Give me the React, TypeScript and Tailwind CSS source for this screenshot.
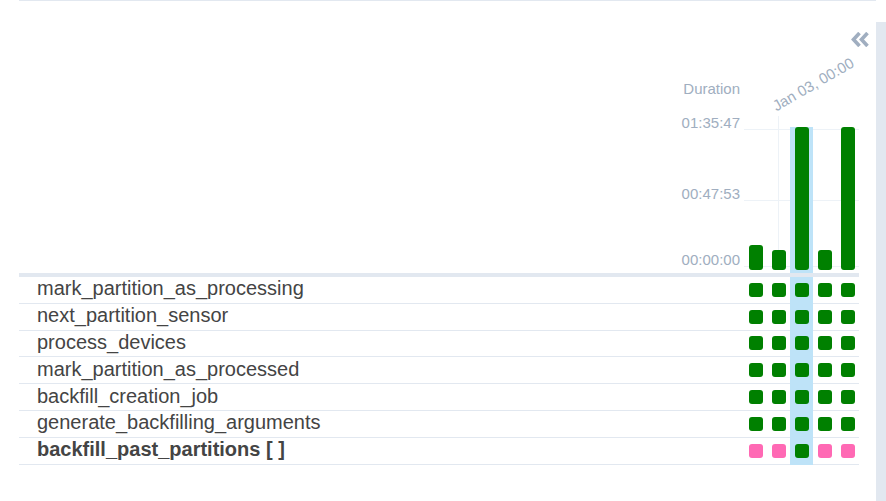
import React from 'react';

type State = 'success' | 'pending';

const tasks: { name: string; bold?: boolean; states: State[] }[] = [
  { name: 'mark_partition_as_processing', states: ['success', 'success', 'success', 'success', 'success'] },
  { name: 'next_partition_sensor', states: ['success', 'success', 'success', 'success', 'success'] },
  { name: 'process_devices', states: ['success', 'success', 'success', 'success', 'success'] },
  { name: 'mark_partition_as_processed', states: ['success', 'success', 'success', 'success', 'success'] },
  { name: 'backfill_creation_job', states: ['success', 'success', 'success', 'success', 'success'] },
  { name: 'generate_backfilling_arguments', states: ['success', 'success', 'success', 'success', 'success'] },
  { name: 'backfill_past_partitions [ ]', bold: true, states: ['pending', 'pending', 'success', 'pending', 'pending'] },
];

// bar heights in px (max = 143)
const bars = [25, 20, 143, 20, 143];
const selected = 2;

const labelFont = { fontFamily: '"Liberation Sans", Arial, sans-serif' };

const App: React.FC = () => {
  return (
    <div className="flex w-[886px] h-[501px] bg-white overflow-hidden" style={labelFont}>
      <div className="ml-[19px] w-[857px] border-t border-[#e2e8f0]">
        {/* header with duration chart */}
        <div className="h-[272px] flex flex-col">
          <div className="flex justify-end pt-[31px] pr-[7px]">
            <svg width="18" height="15" viewBox="0 0 18 15">
              <polyline points="8.5,1 2.5,7.5 8.5,14" fill="none" stroke="#a0aec0" strokeWidth="3.6" />
              <polyline points="16.5,1 10.5,7.5 16.5,14" fill="none" stroke="#a0aec0" strokeWidth="3.6" />
            </svg>
          </div>
          <div className="mt-auto w-[840px] flex justify-end">
            <div className="relative w-[115px] h-[157px]">
              {/* axis labels */}
              <span className="absolute right-[119px] top-[-36px] text-[15px] leading-[17px] text-[#a0aec0] whitespace-nowrap">Duration</span>
              <span className="absolute right-[119px] top-[-2px] text-[15px] leading-[17px] text-[#a0aec0]">01:35:47</span>
              <span className="absolute right-[119px] top-[69px] text-[15px] leading-[17px] text-[#a0aec0]">00:47:53</span>
              <span className="absolute right-[119px] top-[135px] text-[15px] leading-[17px] text-[#a0aec0]">00:00:00</span>
              <span className="absolute left-[69px] top-[-32px] -translate-x-1/2 -translate-y-1/2 rotate-[-30deg] text-[15px] leading-[17px] text-[#a0aec0] whitespace-nowrap">
                Jan 03, 00:00
              </span>
              {/* grid lines */}
              <div className="absolute left-0 right-0 top-[13px] h-px bg-[#edf2f7]" />
              <div className="absolute left-0 right-0 top-[84px] h-px bg-[#edf2f7]" />
              <div className="absolute left-0 right-0 top-[150px] h-px bg-[#edf2f7]" />
              <div className="absolute left-[34px] top-0 h-[154px] w-px bg-[#edf2f7]" />
              {/* bars */}
              <div className="relative flex items-end h-full">
                {bars.map((h, i) => (
                  <div
                    key={i}
                    className={`w-[23px] flex justify-center pb-[3px] ${i === selected ? 'bg-[#bee3f8]' : ''}`}
                  >
                    <div className="w-[14px] rounded-[3px] bg-[#008000]" style={{ height: h }} />
                  </div>
                ))}
              </div>
            </div>
          </div>
        </div>

        {/* task rows */}
        <div className="w-[840px]">
          <div className="h-[4px] bg-[#e2e8f0]" />
          {tasks.map((t) => (
            <div key={t.name} className="flex h-[26.8px]">
              <div
                className={`flex-1 flex items-center pl-[18px] pb-[3px] border-b border-[#e2e8f0] text-[20px] leading-[22px] text-[#444444] ${t.bold ? 'font-bold' : ''}`}
              >
                {t.name}
              </div>
              {t.states.map((s, i) => (
                <div
                  key={i}
                  className={`w-[23px] flex items-center justify-center border-b ${
                    i === selected ? 'bg-[#bee3f8] border-[#bee3f8]' : 'border-[#e2e8f0]'
                  }`}
                >
                  <div className={`w-[14px] h-[14px] rounded-[3px] ${s === 'success' ? 'bg-[#008000]' : 'bg-[#ff69b4]'}`} />
                </div>
              ))}
            </div>
          ))}
        </div>
      </div>
      <div className="mt-[22px] w-[10px] bg-[#e2e8f0]" />
    </div>
  );
};

export default App;
